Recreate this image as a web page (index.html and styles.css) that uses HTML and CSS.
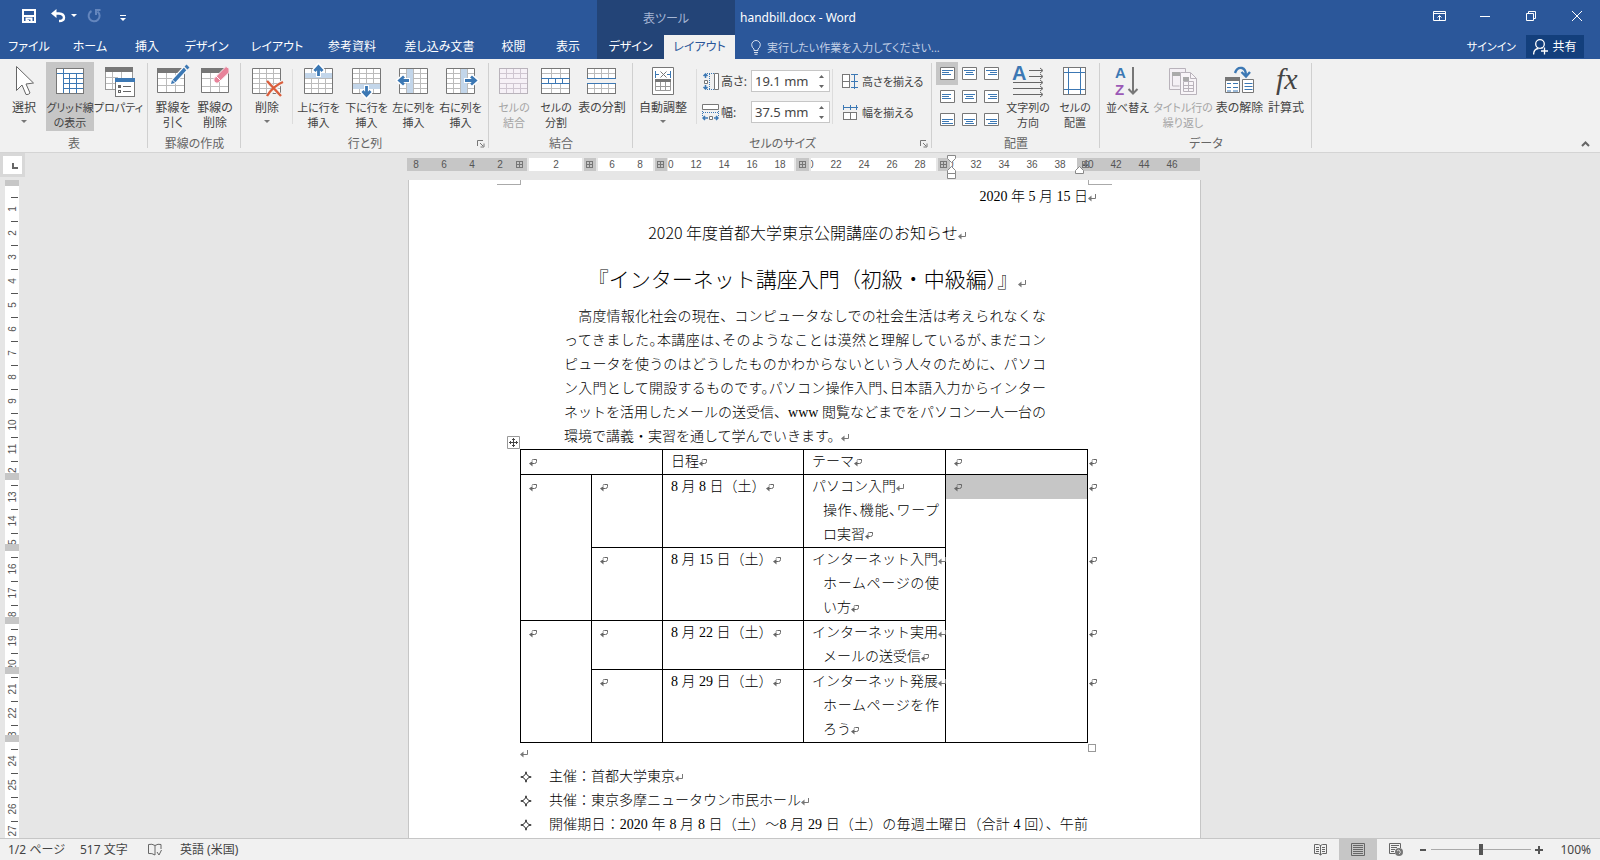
FILE: index.html
```html
<!DOCTYPE html>
<html lang="ja">
<head>
<meta charset="utf-8">
<title>handbill.docx - Word</title>
<link rel="stylesheet" href="styles.css">
</head>
<body>
<svg class="defs" aria-hidden="true">
  <defs>
    <symbol id="para" viewBox="0 0 8 8"><path d="M7.5 0V4.5H2" fill="none" stroke="#777"/><path d="M0 4.5L3.5 1.500V7.500z" fill="#777"/></symbol>
    <symbol id="cell" viewBox="0 0 8 8"><path d="M3 1.500Q3 .5 4.500.5H7.500V2.500Q7.500 4.500 5.500 4.500H2" fill="none" stroke="#666"/><path d="M0 4.500L3.500 2V7.500z" fill="#666"/></symbol>
    <symbol id="grid" viewBox="0 0 32 34"><path d="M1.500 4.500h28v25h-28z" fill="#fff"/><path d="M8.500 5v24M15.500 5v24M22.500 5v24M2 9.500h27M2 14.500h27M2 19.500h27M2 24.500h27" stroke="#bbb"/><path d="M1.500 4.500h28v25h-28z" fill="none" stroke="#777"/></symbol>
    <symbol id="launch" viewBox="0 0 8 8"><path d="M.5 6V.5H6M3 3l3 3M7 3.500V7H3.500" fill="none" stroke="#777"/></symbol>
    <symbol id="star" viewBox="0 0 12 12"><path d="M6 .8Q6.500 5.500 11.200 6Q6.500 6.500 6 11.200Q5.500 6.500 .8 6Q5.500 5.500 6 .8z" fill="#fff" stroke="#222"/></symbol>
    <symbol id="hatch" viewBox="0 0 9 9"><path d="M1.500 1v7M4.500 1v7M7.500 1v7M1 1.500h7M1 4.500h7M1 7.500h7" stroke="#777"/></symbol>
  </defs>
</svg>
<div class="app">
  <header class="head">
    <div class="titlebar">
      <div class="quick">
        <button aria-label="上書き保存"><svg width="14" height="14" viewBox="0 0 14 14"><path d="M1 1h12v12H1z" fill="none" stroke="#fff" stroke-width="2"/><path d="M2 7h10M4.500 13V9.500h5V13" fill="none" stroke="#fff" stroke-width="2"/><path d="M5 11h2v2H5z" fill="#fff"/></svg></button>
        <button aria-label="元に戻す"><svg width="26" height="14" viewBox="0 0 26 14"><path d="M0 4.500L5.500 0V9z" fill="#fff"/><path d="M3 4.500h5q5 .5 5 4q0 3.500-5 3.500" fill="none" stroke="#fff" stroke-width="2.400"/><path d="M20 5h6l-3 3z" fill="#fff"/></svg></button>
        <button aria-label="やり直し"><svg width="14" height="14" viewBox="0 0 14 14"><path d="M4.500 2A5.500 5.500 0 1 0 10.500 2.500" fill="none" stroke="#6486bd" stroke-width="2"/><path d="M8 0h5.500v2H10v4H8z" fill="#6486bd"/></svg></button>
        <button class="more" aria-label="カスタマイズ"><svg width="6" height="8" viewBox="0 0 6 8"><path d="M0 1.500h6" stroke="#fff"/><path d="M0 4h6L3 7z" fill="#fff"/></svg></button>
      </div>
      <div class="context">表ツール</div>
      <h1>handbill.docx - Word</h1>
      <div class="window">
        <button aria-label="リボンの表示オプション"><svg width="13" height="10" viewBox="0 0 13 10"><path d="M.5.5h12v9H.500zM0 2.500h13M6.500 9V4.500M4.500 6.500l2-2 2 2" fill="none" stroke="#fff"/></svg></button>
        <button aria-label="最小化"><svg width="10" height="10" viewBox="0 0 10 10"><path d="M0 5.500h10" stroke="#fff"/></svg></button>
        <button aria-label="元のサイズに戻す"><svg width="10" height="10" viewBox="0 0 10 10"><path d="M.5 2.500h7v7h-7zM2.500 2V.5h7v7H8" fill="none" stroke="#fff"/></svg></button>
        <button aria-label="閉じる"><svg width="10" height="10" viewBox="0 0 10 10"><path d="M0 0l10 10M10 0L0 10" stroke="#fff"/></svg></button>
      </div>
    </div>
    <div class="tabrow">
      <nav class="tabs">
        <button>ファイル</button><button>ホーム</button><button>挿入</button><button>デザイン</button><button>レイアウト</button><button>参考資料</button><button>差し込み文書</button><button>校閲</button><button>表示</button><button class="dark">デザイン</button><button class="active">レイアウト</button>
      </nav>
      <button class="tell"><svg width="10" height="15" viewBox="0 0 10 15"><path d="M3 10.500V9Q.7 7.500.7 4.800A4.300 4.300 0 0 1 9.300 4.800Q9.300 7.500 7 9v1.500zM3 12.500h4M3.500 14.300h3" fill="none" stroke="#d6dfee"/></svg>実行したい作業を入力してください...</button>
      <a class="signin" href="#">サインイン</a>
      <button class="share"><svg width="15" height="16" viewBox="0 0 15 16"><path d="M.6 15.500Q.6 10 5.500 9.500M9.500 9.500l-1-1" fill="none" stroke="#fff" stroke-width="1.300"/><circle cx="7" cy="5" r="4.300" fill="none" stroke="#fff" stroke-width="1.300"/><path d="M11.500 8.500v7M8 12h7" stroke="#fff" stroke-width="1.300"/></svg>共有</button>
    </div>
  </header>

  <section class="ribbon" aria-label="レイアウト">
    <div class="group">
      <div class="tools g1">
        <button class="big"><svg class="ico" viewBox="0 0 32 34"><path d="M8.500 2.500V26.500L14 21l4 9.500q2.500.5 4-1.500L18 20l7.500-1z" fill="#fff" stroke="#666"/></svg><span>選択</span><i class="drop"></i></button>
        <button class="big on tight"><svg class="ico crisp" viewBox="0 0 32 34"><path d="M2.500 4.500h27v25h-27z" fill="#fff"/><path d="M9.500 5v24M15.500 10v19M22.500 10v19M10 14.500h19M10 19.500h19M10 24.500h19M3 9.500h26" stroke="#3c78b4"/><path d="M2.500 4.500h27v25h-27z" fill="none" stroke="#777"/></svg><span>グリッド線<br>の表示</span></button>
        <button class="big tight"><svg class="ico crisp" viewBox="0 0 32 34"><path d="M2.500 3.500h27v22h-27z" fill="#fff" stroke="#999"/><path d="M2 3h28v5H2z" fill="#777"/><path d="M9.500 8v17M18.500 8v10M3 13.500h12M3 19.500h12" stroke="#bbb"/><path d="M12.500 14.500h19v18h-19z" fill="#fff" stroke="#777"/><path d="M12 14h20v4H12z" fill="#3c78b4"/><path d="M20 22.500h8M20 27.500h8" stroke="#666"/><circle cx="16.500" cy="22.500" r="1.500" fill="#666"/><circle cx="16.500" cy="27.500" r="1" fill="#fff" stroke="#666"/></svg><span>プロパティ</span></button>
      </div><p>表</p>
    </div>
    <div class="group">
      <div class="tools g2">
        <button class="big"><svg class="ico" viewBox="0 0 32 34"><path d="M.5 4.500h27v24H.500z" fill="#fff" stroke="#777"/><path d="M0 4h28v5H0z" fill="#777"/><path d="M9.500 9v19M18.500 9v19M1 14.500h26M1 21.500h26" stroke="#bbb"/><path d="M16 18L28 5" stroke="#fff" stroke-width="6"/><path d="M17 17L28 5" stroke="#3c78b4" stroke-width="3.600"/><path d="M29 4l2-2" stroke="#3c78b4" stroke-width="4"/><path d="M14 20l1-4 3 3z" fill="#3c78b4"/></svg><span>罫線を<br>引く</span></button>
        <button class="big"><svg class="ico" viewBox="0 0 32 34"><path d="M2.500 4.500h27v24h-27z" fill="#fff" stroke="#777"/><path d="M2 4h28v5H2z" fill="#777"/><path d="M11.500 9v19M20.500 9v19M3 14.500h12M3 22.500h26" stroke="#bbb"/><path d="M15 14.500L27 2.500l3 2v4L19 19h-2l-2-2z" fill="#e8839a" stroke="#f6e9ed"/><path d="M17 12l5 5" stroke="#fff"/></svg><span>罫線の<br>削除</span></button>
      </div><p>罫線の作成</p>
    </div>
    <div class="group">
      <div class="tools g3">
        <button class="big"><svg class="ico" viewBox="0 0 32 34"><use href="#grid"/><path d="M16 17l14 15M31 18L16 32" stroke="#f1f1f1" stroke-width="4"/><path d="M16 17l14 15M32 18Q22 22 16 32" fill="none" stroke="#da5e3c" stroke-width="2.400"/></svg><span>削除</span><i class="drop"></i></button>
        <i class="rule"></i>
        <button class="big tight"><svg class="ico" viewBox="0 0 32 34"><use href="#grid"/><path d="M2 9h27v5H2z" fill="#c3d6ea"/><path d="M15.500 13V3M11 7l4.500-5L20 7" fill="none" stroke="#fff" stroke-width="5"/><path d="M15.500 12V3M11.500 7l4-4.500 4 4.500" fill="none" stroke="#3c78b4" stroke-width="2.800"/></svg><span>上に行を<br>挿入</span></button>
        <button class="big tight"><svg class="ico" viewBox="0 0 32 34"><use href="#grid"/><path d="M2 20h27v5H2z" fill="#c3d6ea"/><path d="M15.500 21v11M11 27l4.500 5 4.500-5" fill="none" stroke="#fff" stroke-width="5"/><path d="M15.500 22v9M11.500 27l4 4.500 4-4.500" fill="none" stroke="#3c78b4" stroke-width="2.800"/></svg><span>下に行を<br>挿入</span></button>
        <button class="big tight"><svg class="ico" viewBox="0 0 32 34"><use href="#grid"/><path d="M9 5h6v24H9z" fill="#c3d6ea"/><path d="M12 16.500H2M6 12l-5 4.500L6 21" fill="none" stroke="#fff" stroke-width="5"/><path d="M11 16.500H2M6 12.500l-4.500 4L6 20.500" fill="none" stroke="#3c78b4" stroke-width="2.800"/></svg><span>左に列を<br>挿入</span></button>
        <button class="big tight"><svg class="ico" viewBox="0 0 32 34"><use href="#grid"/><path d="M16 5h6v24h-6z" fill="#c3d6ea"/><path d="M19 16.500h11M26 12l5 4.500-5 4.500" fill="none" stroke="#fff" stroke-width="5"/><path d="M20 16.500h10M26 12.500l4.500 4-4.500 4" fill="none" stroke="#3c78b4" stroke-width="2.800"/></svg><span>右に列を<br>挿入</span></button>
      </div><p>行と列</p><button class="launch" aria-label="表の行と列"><svg width="8" height="8"><use href="#launch"/></svg></button>
    </div>
    <div class="group">
      <div class="tools g4">
        <button class="big tight" disabled><svg class="ico crisp" viewBox="0 0 32 34"><path d="M1.500 4.500h28v25h-28z" fill="#f6f1f7" stroke="#b9b3bb"/><path d="M8.500 5v9M15.500 5v9M22.500 5v9M8.500 20v9M15.500 20v9M22.500 20v9M2 9.500h27M2 14.500h27M2 19.500h27M2 24.500h27" stroke="#cfc6d1"/></svg><span>セルの<br>結合</span></button>
        <button class="big tight"><svg class="ico crisp" viewBox="0 0 32 34"><path d="M1.500 4.500h28v25h-28z" fill="#fff" stroke="#777"/><path d="M11.500 5v9M20.500 5v9M11.500 20v9M20.500 20v9M2 9.500h27M2 24.500h27" stroke="#bbb"/><path d="M1 14.500h29M1 19.500h29M8.500 15v4M15.500 15v4M22.500 15v4" stroke="#3c78b4"/></svg><span>セルの<br>分割</span></button>
        <button class="big"><svg class="ico crisp" viewBox="0 0 32 34"><path d="M1.500 4.500h28v10h-28zM1.500 19.500h28v10h-28z" fill="#fff" stroke="#777"/><path d="M8.500 5v9M15.500 5v9M22.500 5v9M8.500 20v9M15.500 20v9M22.500 20v9M2 9.500h27M2 24.500h27" stroke="#bbb"/><path d="M1 14.500h29M1 19.500h29" stroke="#3c78b4"/></svg><span>表の分割</span></button>
      </div><p>結合</p>
    </div>
    <div class="group">
      <div class="tools g5">
        <button class="big"><svg class="ico" viewBox="0 0 32 34"><path d="M5.500 3.500h21v27h-21z" fill="#fff" stroke="#777"/><path d="M8.500 7v7M23.500 7v7M9 10.500h3M20 10.500h3" stroke="#3c78b4"/><path d="M13.500 7.500l6 6M19.500 7.500l-6 6" stroke="#777"/><path d="M8.500 16.500h15v10h-15zM13.500 18v8M18.500 18v8M9 22.500h14" fill="none" stroke="#999"/><path d="M8 15h16v3H8z" fill="#777"/></svg><span>自動調整</span><i class="drop"></i></button>
        <i class="rule"></i>
        <div class="sizes">
          <label for="h"><svg class="mini" viewBox="0 0 17 17"><path d="M5 .5h7M5 16.500h7M7.500 1v15" fill="none" stroke="#3c78b4" stroke-dasharray="1 1"/><path d="M12.500.5h4v16h-4zM2.500 7.500h3v3h-3z" fill="#fff" stroke="#777"/><path d="M3.500 1v4M1.500 3l2-2 2 2M3.500 12v4M1.500 14l2 2 2-2" fill="none" stroke="#3c78b4" stroke-width="1.500"/></svg>高さ:</label>
          <div class="spin"><input id="h" type="text" value="19.1 mm"><button aria-label="高さの増減"><svg width="5" height="13" viewBox="0 0 5 13"><path d="M0 3L2.500 0 5 3zM0 10l2.500 3L5 10z" fill="#666"/></svg></button></div>
          <label for="w"><svg class="mini" viewBox="0 0 17 17"><path d="M.5.5h16v5H.500zM7.500 12.500h3v3h-3z" fill="#fff" stroke="#777"/><path d="M.5 7v5M16.500 7v5M1 8.500h15" fill="none" stroke="#3c78b4" stroke-dasharray="1 1"/><path d="M1 14h5M3 12l-2 2 2 2M12 14h4M14 12l2 2-2 2" fill="none" stroke="#3c78b4" stroke-width="1.500"/></svg>幅:</label>
          <div class="spin"><input id="w" type="text" value="37.5 mm"><button aria-label="幅の増減"><svg width="5" height="13" viewBox="0 0 5 13"><path d="M0 3L2.500 0 5 3zM0 10l2.500 3L5 10z" fill="#666"/></svg></button></div>
        </div>
        <i class="rule"></i>
        <div class="evens">
          <button><svg class="mini crisp" viewBox="0 0 17 17"><path d="M.5 1.500h7v13h-7zM1 8.500h7" fill="#fff" stroke="#777"/><path d="M9 1.500h7M9 8.500h7M9 14.500h7M12.500 1v15" stroke="#3c78b4"/></svg>高さを揃える</button>
          <button><svg class="mini crisp" viewBox="0 0 17 17"><path d="M1.500 8.500h13v7h-13zM8.500 9v7" fill="#fff" stroke="#777"/><path d="M1 3.500h15M1.500 1v5M8.500 1v5M14.500 1v5" stroke="#3c78b4"/></svg>幅を揃える</button>
        </div>
      </div><p>セルのサイズ</p><button class="launch" aria-label="表のプロパティ"><svg width="8" height="8"><use href="#launch"/></svg></button>
    </div>
    <div class="group">
      <div class="tools g6">
        <div class="aligns">
          <button class="on" aria-label="上揃え (左)"><svg viewBox="0 0 15 13"><path d="M.5.5h14v12H.500z"/><path class="ln" d="M2 3.500h11M2 5.500h7M2 7.500h9"/></svg></button>
          <button aria-label="上揃え (中央)"><svg viewBox="0 0 15 13"><path d="M.5.5h14v12H.500z"/><path class="ln" d="M2 3.500h11M4 5.500h7M3 7.500h9"/></svg></button>
          <button aria-label="上揃え (右)"><svg viewBox="0 0 15 13"><path d="M.5.5h14v12H.500z"/><path class="ln" d="M2 3.500h11M6 5.500h7M4 7.500h9"/></svg></button>
          <button aria-label="左"><svg viewBox="0 0 15 13"><path d="M.5.5h14v12H.500z"/><path class="ln" d="M2 4.500h9M2 6.500h7M2 8.500h9"/></svg></button>
          <button aria-label="中央"><svg viewBox="0 0 15 13"><path d="M.5.5h14v12H.500z"/><path class="ln" d="M2 4.500h11M4 6.500h7M3 8.500h9"/></svg></button>
          <button aria-label="右"><svg viewBox="0 0 15 13"><path d="M.5.5h14v12H.500z"/><path class="ln" d="M4 4.500h9M6 6.500h7M4 8.500h9"/></svg></button>
          <button aria-label="下揃え (左)"><svg viewBox="0 0 15 13"><path d="M.5.5h14v12H.500z"/><path class="ln" d="M2 6.500h11M2 8.500h7M2 10.500h11"/></svg></button>
          <button aria-label="下揃え (中央)"><svg viewBox="0 0 15 13"><path d="M.5.5h14v12H.500z"/><path class="ln" d="M2 6.500h11M4 8.500h7M3 10.500h9"/></svg></button>
          <button aria-label="下揃え (右)"><svg viewBox="0 0 15 13"><path d="M.5.5h14v12H.500z"/><path class="ln" d="M2 6.500h11M6 8.500h7M4 10.500h9"/></svg></button>
        </div>
        <button class="big tight"><svg class="ico" viewBox="0 0 32 34"><text x="0" y="16" class="glyph blue" font-size="20">A</text><path d="M17 6.500h13M17 12.500h13M1 18.500h29M1 24.500h29M1 30.500h29M28 4l3 2.500L28 9M28 10l3 2.500-3 2.500M28 16l3 2.500-3 2.500M28 22l3 2.500-3 2.500M28 28l3 2.500-3 2.500" fill="none" stroke="#666"/></svg><span>文字列の<br>方向</span></button>
        <button class="big tight"><svg class="ico crisp" viewBox="0 0 32 34"><path d="M4.500 3.500h22v27h-22z" fill="#fff" stroke="#777"/><path d="M9.500 4v26M21.500 4v26M5 8.500h21M5 25.500h21" stroke="#3c78b4"/></svg><span>セルの<br>配置</span></button>
      </div><p>配置</p>
    </div>
    <div class="group">
      <div class="tools g7">
        <button class="big tight"><svg class="ico" viewBox="0 0 32 34"><text x="3" y="14" class="glyph blue" font-size="15">A</text><text x="3" y="31" class="glyph violet" font-size="15">Z</text><path d="M21 3v26M16.500 25l4.500 4.500 4.500-4.500" fill="none" stroke="#777" stroke-width="2"/></svg><span>並べ替え</span></button>
        <button class="big tight" disabled><svg class="ico" viewBox="0 0 32 34"><path d="M2.500 4.500h16v21h-16z" fill="#f4f0f5" stroke="#b9b3bb"/><path d="M5 8h8v4H5z" fill="#aaa"/><path d="M5.500 12v10h7" fill="none" stroke="#b9b3bb"/><path d="M13.500 8.500h10l6 6v16h-16z" fill="#f8f5f8" stroke="#b9b3bb"/><path d="M23.500 9v5.500h6M16.500 17.500h10v10h-10zM21.500 17v10M16 21.500h11M16 24.500h11" fill="none" stroke="#b9b3bb"/><path d="M16 13h6v4h-6z" fill="#aaa"/></svg><span>タイトル行の<br>繰り返し</span></button>
        <button class="big"><svg class="ico" viewBox="0 0 32 34"><path d="M1.500 13.500h14v15h-14zM18.500 15.500h11v13h-11z" fill="#fff" stroke="#777"/><path d="M1 13h15v4H1z" fill="#777"/><path d="M3 19.500h4M9 19.500h5M3 23.500h4M9 23.500h5M3 27h4M9 27h5M20.500 19.500h8M20.500 22.500h8M20.500 25.500h8" stroke="#3c78b4"/><path d="M11 9Q13 3 18 4q4 1 4 8M17.500 8l4.500 4.500L26 8" fill="none" stroke="#3c78b4" stroke-width="2.400"/></svg><span>表の解除</span></button>
        <button class="big"><svg class="ico" viewBox="0 0 32 34"><text x="6" y="25" class="fx" font-size="30">fx</text></svg><span>計算式</span></button>
      </div><p>データ</p>
    </div>
    <button class="collapse" aria-label="リボンを折りたたむ"><svg width="9" height="6" viewBox="0 0 9 6"><path d="M1 5l3.500-3.500L8 5" fill="none" stroke="#666" stroke-width="2"/></svg></button>
  </section>

  <main class="work">
    <aside class="vrule">
      <button class="corner" aria-label="タブ"><svg width="6" height="6" viewBox="0 0 6 6"><path d="M1 0v5h5" fill="none" stroke="#666" stroke-width="2"/></svg></button>
      <svg width="25" height="661" viewBox="0 177 25 661">
        <path d="M5 180h14v658H5z" fill="#fff"/>
        <path d="M14.500 197v640" stroke="#555" stroke-width="7" stroke-dasharray="1 23"/>
        <g class="num">
          <text transform="translate(16 209) rotate(-90)">1</text><text transform="translate(16 233) rotate(-90)">2</text><text transform="translate(16 257) rotate(-90)">3</text><text transform="translate(16 281) rotate(-90)">4</text><text transform="translate(16 305) rotate(-90)">5</text><text transform="translate(16 329) rotate(-90)">6</text><text transform="translate(16 353) rotate(-90)">7</text><text transform="translate(16 377) rotate(-90)">8</text><text transform="translate(16 401) rotate(-90)">9</text><text transform="translate(16 425) rotate(-90)">10</text><text transform="translate(16 449) rotate(-90)">11</text><text transform="translate(16 473) rotate(-90)">12</text><text transform="translate(16 497) rotate(-90)">13</text><text transform="translate(16 521) rotate(-90)">14</text><text transform="translate(16 545) rotate(-90)">15</text><text transform="translate(16 569) rotate(-90)">16</text><text transform="translate(16 593) rotate(-90)">17</text><text transform="translate(16 617) rotate(-90)">18</text><text transform="translate(16 641) rotate(-90)">19</text><text transform="translate(16 665) rotate(-90)">20</text><text transform="translate(16 689) rotate(-90)">21</text><text transform="translate(16 713) rotate(-90)">22</text><text transform="translate(16 737) rotate(-90)">23</text><text transform="translate(16 761) rotate(-90)">24</text><text transform="translate(16 785) rotate(-90)">25</text><text transform="translate(16 809) rotate(-90)">26</text><text transform="translate(16 831) rotate(-90)">27</text>
        </g>
        <path d="M5 180h14v6H5zM5 473h14v7H5zM5 544h14v7H5zM5 617h14v7H5zM5 667h14v7H5zM5 735h14v7H5z" fill="#c6c6c6"/>
      </svg>
    </aside>
    <div class="desk">
      <svg class="hrule" width="795" height="27" viewBox="407 153 795 27">
        <path d="M407 158h793v13H407z" fill="#fff"/>
        <path d="M407 158h120v13H407zM1077 158h123v13h-123z" fill="#c6c6c6"/>
        <g class="num">
          <text x="416" y="168">8</text><text x="444" y="168">6</text><text x="472" y="168">4</text><text x="500" y="168">2</text><text x="556" y="168">2</text><text x="612" y="168">6</text><text x="640" y="168">8</text><text x="668" y="168">10</text><text x="696" y="168">12</text><text x="724" y="168">14</text><text x="752" y="168">16</text><text x="780" y="168">18</text><text x="808" y="168">20</text><text x="836" y="168">22</text><text x="864" y="168">24</text><text x="892" y="168">26</text><text x="920" y="168">28</text><text x="948" y="168">30</text><text x="976" y="168">32</text><text x="1004" y="168">34</text><text x="1032" y="168">36</text><text x="1060" y="168">38</text><text x="1088" y="168">40</text><text x="1116" y="168">42</text><text x="1144" y="168">44</text><text x="1172" y="168">46</text>
        </g>
        <path d="M527 158h2v13h-2zM582 158h16v13h-16zM653 158h15v13h-15zM794 158h17v13h-17zM936 158h14v13h-14z" fill="#e6e6e6"/>
        <path d="M584 158h12v13h-12zM655 158h12v13h-12zM796 158h13v13h-13zM938 158h12v13h-12z" fill="#c6c6c6"/>
        <use href="#hatch" x="515" y="160" width="9" height="9"/><use href="#hatch" x="585" y="160" width="9" height="9"/><use href="#hatch" x="656" y="160" width="9" height="9"/><use href="#hatch" x="798" y="160" width="9" height="9"/><use href="#hatch" x="939" y="160" width="9" height="9"/><use href="#hatch" x="1081" y="160" width="9" height="9"/>
        <path d="M947.500 155.500h8v3l-4 4-4-4zM947.500 173.500v-3l4-4 4 4v3zM947.500 173.500h8v5h-8zM1075.500 173.500v-3l4-4 4 4v3z" fill="#fff" stroke="#888"/>
      </svg>
      <article class="page">
        <i class="crop left"></i><i class="crop right"></i>
        <p class="date">2020 年 5 月 15 日<svg class="mk out"><use href="#para"/></svg></p>
        <h2>2020 年度首都大学東京公開講座のお知らせ<svg class="mk"><use href="#para"/></svg></h2>
        <h3>『インターネット講座入門（初級・中級編）』<svg class="mk"><use href="#para"/></svg></h3>
        <p class="lead">
          <span>　高度情報化社会の現在、コンピュータなしでの社会生活は考えられなくな</span>
          <span class="half">ってきました。本講座は、そのようなことは漠然と理解しているが、まだコン</span>
          <span>ピュータを使うのはどうしたものかわからないという人々のために、パソコ</span>
          <span class="half">ン入門として開設するものです。パソコン操作入門、日本語入力からインター</span>
          <span>ネットを活用したメールの送受信、www 閲覧などまでをパソコン一人一台の</span>
          <span class="end">環境で講義・実習を通して学んでいきます。<svg class="mk"><use href="#para"/></svg></span>
        </p>
        <div class="tablebox">
          <svg class="move" viewBox="0 0 13 13"><path d="M.5.5h12v12H.500z" fill="#fff" stroke="#999"/><path d="M6.500 2v9M2 6.500h9M5 3.500h3M5 9.500h3M3.500 5v3M9.500 5v3" stroke="#444"/></svg>
          <table>
            <colgroup><col class="c1"><col class="c1"><col class="c2"><col class="c3"><col class="c3"><col class="c0"></colgroup>
            <tr><td colspan="2"><svg class="mk"><use href="#cell"/></svg></td><td>日程<svg class="mk"><use href="#cell"/></svg></td><td>テーマ<svg class="mk"><use href="#cell"/></svg></td><td><svg class="mk"><use href="#cell"/></svg></td><td class="eor"><svg class="mk"><use href="#cell"/></svg></td></tr>
            <tr><td rowspan="2"><svg class="mk"><use href="#cell"/></svg></td><td><svg class="mk"><use href="#cell"/></svg></td><td>8 月 8 日（土）<svg class="mk"><use href="#cell"/></svg></td><td>パソコン入門<svg class="mk"><use href="#para"/></svg><span class="sub half wide">操作、機能、ワープ</span><span class="sub">ロ実習<svg class="mk"><use href="#cell"/></svg></span></td><td rowspan="4" class="pick"><div><svg class="mk"><use href="#cell"/></svg></div></td><td class="eor"><svg class="mk"><use href="#cell"/></svg></td></tr>
            <tr><td><svg class="mk"><use href="#cell"/></svg></td><td>8 月 15 日（土）<svg class="mk"><use href="#cell"/></svg></td><td>インターネット入門<svg class="mk"><use href="#para"/></svg><span class="sub wide">ホームページの使</span><span class="sub">い方<svg class="mk"><use href="#cell"/></svg></span></td><td class="eor"><svg class="mk"><use href="#cell"/></svg></td></tr>
            <tr><td rowspan="2"><svg class="mk"><use href="#cell"/></svg></td><td><svg class="mk"><use href="#cell"/></svg></td><td>8 月 22 日（土）<svg class="mk"><use href="#cell"/></svg></td><td>インターネット実用<svg class="mk"><use href="#para"/></svg><span class="sub">メールの送受信<svg class="mk"><use href="#cell"/></svg></span></td><td class="eor"><svg class="mk"><use href="#cell"/></svg></td></tr>
            <tr><td><svg class="mk"><use href="#cell"/></svg></td><td>8 月 29 日（土）<svg class="mk"><use href="#cell"/></svg></td><td>インターネット発展<svg class="mk"><use href="#para"/></svg><span class="sub wide">ホームページを作</span><span class="sub">ろう<svg class="mk"><use href="#cell"/></svg></span></td><td class="eor"><svg class="mk"><use href="#cell"/></svg></td></tr>
          </table>
          <i class="resize"></i>
        </div>
        <p class="blank"><svg class="mk"><use href="#para"/></svg></p>
        <ul>
          <li><svg class="star"><use href="#star"/></svg><span>主催：首都大学東京<svg class="mk"><use href="#para"/></svg></span></li>
          <li><svg class="star"><use href="#star"/></svg><span>共催：東京多摩ニュータウン市民ホール<svg class="mk"><use href="#para"/></svg></span></li>
          <li><svg class="star"><use href="#star"/></svg><span class="full">開催期日：2020 年 8 月 8 日（土）～8 月 29 日（土）の毎週土曜日（合計 4 回）、午前</span></li>
        </ul>
      </article>
    </div>
  </main>

  <footer class="status">
    <span class="s1">1/2 ページ</span><span class="s2">517 文字</span>
    <svg class="s3" width="14" height="14" viewBox="0 0 14 14"><path d="M7 2.500Q4 .5.5 1.500v9Q4 10 7 12M7 2.500v9.500M7 2.500Q10 .5 13 1.500V6M9 9l2 3 2.500-5" fill="none" stroke="#666"/></svg>
    <span class="s4">英語 (米国)</span>
    <div class="views">
      <button aria-label="閲覧モード"><svg width="13" height="13" viewBox="0 0 13 13"><path d="M.5 1.500h4l2 1 2-1h4v9h-4l-2 1.500-2-1.500h-4zM6.500 2v10M2 4.500h3M2 6.500h3M2 8.500h3M8 4.500h3M8 6.500h3M8 8.500h3" fill="none" stroke="#666"/></svg></button>
      <button class="on" aria-label="印刷レイアウト"><svg width="14" height="13" viewBox="0 0 14 13"><path d="M.5.5h13v12H.500zM2 2.500h10M2 4.500h10M2 6.500h10M2 8.500h10M2 10.500h10" fill="none" stroke="#666"/></svg></button>
      <button aria-label="Web レイアウト"><svg width="14" height="13" viewBox="0 0 14 13"><path d="M6 10.500H.5V.5h11V5M2 2.500h8M2 4.500h6M2 6.500h4M2 8.500h3" fill="none" stroke="#666"/><circle cx="10" cy="9" r="4" fill="#777"/><path d="M8 8q2-2 3 0t-1 3" fill="none" stroke="#ddd"/></svg></button>
    </div>
    <div class="zoom">
      <button aria-label="縮小"><svg width="8" height="8" viewBox="0 0 8 8"><path d="M1 4h6" stroke="#555" stroke-width="2"/></svg></button>
      <input type="range" min="0" max="100" value="50" aria-label="ズーム">
      <button aria-label="拡大"><svg width="8" height="8" viewBox="0 0 8 8"><path d="M0 4h8M4 0v8" stroke="#555" stroke-width="2"/></svg></button>
      <span>100%</span>
    </div>
  </footer>
</div>
</body>
</html>
```
FILE: styles.css
```css
* { box-sizing: border-box; }
body { margin: 0; font: 12px/15px "Noto Sans", "Noto Sans CJK JP", sans-serif; color: #444; font-feature-settings: "palt"; }
p, h1, h2, h3, ul { margin: 0; padding: 0; }
h1 { font-weight: 400; }
button { font: inherit; font-feature-settings: inherit; color: inherit; background: none; border: 0; padding: 0; margin: 0; white-space: nowrap; display: flex; align-items: center; justify-content: center; }
svg { display: block; flex: none; }
.defs { position: absolute; width: 0; height: 0; }
.crisp { shape-rendering: crispEdges; }
.app { height: 100vh; display: flex; flex-direction: column; overflow: hidden; }

/* title bar and tabs */
.head { background: #2b579a; color: #fff; flex: none; }
.titlebar { display: grid; grid-template-columns: 597px 138px 1fr auto; height: 35px; }
.quick { display: flex; align-items: center; gap: 10px; padding: 0 0 6px 22px; }
.quick button:nth-child(2) { margin-left: 5px; }
.quick .more { margin-left: 9px; padding-top: 4px; }
.context { background: #234477; color: #a6b6d4; text-align: center; line-height: 37px; font-size: 12px; }
.titlebar h1 { font-size: 12px; line-height: 35px; padding-left: 5px; }
.window { display: grid; grid-template-columns: repeat(4, 46px); padding: 0 0 5px 0; }
.tabrow { display: flex; height: 24px; }
.tabs { display: grid; grid-template-columns: 58px 64px 50px 69px 72px 78px 97px 51px 58px 67px 71px; }
.tabs button { padding-bottom: 2px; }
.tabs .dark { background: #234477; }
.tabs .active { background: #f1f1f1; color: #2b579a; }
.tell { margin-left: 16px; gap: 6px; color: #c3d0e6; font-size: 11px; }
.signin { margin-left: auto; color: #fff; text-decoration: none; line-height: 23px; font-size: 11px; }
.share { background: #133f7c; margin: 0 16px 1px 10px; width: 58px; gap: 4px; }

/* ribbon */
.ribbon { flex: none; display: grid; grid-template-columns: 148px 93px 248px 144px 299px 168px 212px 1fr; height: 94px; background: #f1f1f1; border-bottom: 1px solid #d4d4d4; position: relative; }
.group { position: relative; padding-top: 3px; }
.group::after { content: ""; position: absolute; right: 0; top: 4px; bottom: 4px; width: 1px; background: #d0d0d0; }
.group p { text-align: center; color: #666; line-height: 25px; height: 21px; }
.tools { display: grid; height: 69px; }
.g1 { grid-template-columns: 44px 48px 49px; padding-left: 2px; }
.g2 { grid-template-columns: 42px 42px; padding-left: 4px; }
.g3 { grid-template-columns: 48px 3px 49px 47px 47px 47px; padding-left: 2px; }
.g4 { grid-template-columns: 42px 42px 50px; padding-left: 4px; }
.g5 { grid-template-columns: 58px 8px 128px 8px 1fr; padding-left: 1px; }
.g6 { grid-template-columns: 70px 50px 44px; padding-left: 1px; }
.g7 { grid-template-columns: 49px 62px 51px 42px; padding-left: 3px; }
.tools .big { flex-direction: column; justify-content: flex-start; padding-top: 2px; line-height: 15px; }
.tools .tight { font-size: 11px; }
.big span { margin-top: 2px; }
.on { background: #c6c6c6; }
.big:disabled { color: #a5a5a5; }
.ico { width: 32px; height: 34px; overflow: visible; }
.drop { border: 3px solid transparent; border-top-color: #777; border-bottom: 0; margin-top: 5px; }
.rule { width: 1px; background: #dcdcdc; margin: 7px 0; justify-self: center; }
.launch { position: absolute; right: 4px; bottom: 4px; }
.sizes { display: grid; grid-template-columns: 49px 79px; row-gap: 9px; padding: 8px 0 0 2px; align-content: start; }
.sizes label { display: flex; align-items: center; gap: 2px; white-space: nowrap; }
.mini { width: 17px; height: 17px; }
.spin { display: flex; height: 22px; background: #fff; border: 1px solid #c6c6c6; }
.spin input { flex: 1; min-width: 0; border: 0; padding: 0 0 0 3px; background: none; color: #444; font: 13px/20px "Noto Sans", sans-serif; }
.spin button { width: 16px; }
.evens { display: grid; grid-template-rows: 22px 22px; row-gap: 9px; padding: 8px 0 0 6px; justify-items: start; font-size: 11px; }
.evens button { gap: 3px; }
.aligns { display: grid; grid-template-columns: repeat(3, 22px); grid-template-rows: repeat(3, 23px); padding-left: 3px; }
.aligns svg { width: 15px; height: 13px; fill: #fff; stroke: #777; }
.aligns .ln { stroke: #3c78b4; }
.glyph { font-family: "Liberation Sans", sans-serif; font-weight: 700; }
.blue { fill: #3c78b4; }
.violet { fill: #9b59b6; }
.fx { font-family: "Liberation Serif", serif; font-style: italic; fill: #444; }
.collapse { position: absolute; right: 10px; bottom: 5px; }

/* workspace */
.work { flex: 1; min-height: 0; display: grid; grid-template-columns: 25px 1fr 16px; background: #e6e6e6; overflow: hidden; }
.vrule, .desk { min-height: 0; overflow: hidden; }
.corner { width: 25px; height: 24px; border: 3px solid #d8d8d8; background: #fff; padding: 2px 0 0 4px; }
.num { font: 10px "Liberation Sans", sans-serif; fill: #555; text-anchor: middle; }
.desk { display: flex; flex-direction: column; align-items: center; }
.page { flex: 1 0 auto; position: relative; width: 793px; background: #fff; border: solid #c6c6c6; border-width: 0 1px; padding: 5px 112px 0 111px; color: #000; font: 300 14px/24px "Liberation Serif", "Noto Sans CJK JP", serif; font-feature-settings: normal; }
.crop { position: absolute; top: 0; width: 24px; height: 5px; border-bottom: 1px solid #aaa; }
.crop.left { left: 88px; border-right: 1px solid #aaa; }
.crop.right { right: 88px; border-left: 1px solid #aaa; }
.mk { display: inline-block; width: 8px; height: 8px; vertical-align: -1px; }
.date { text-align: right; }
.date .out { margin-right: -8px; }
.page h2 { font: 300 16px/46px "Noto Sans CJK JP", sans-serif; text-align: center; padding: 0 0 2px 6px; }
.page h3 { font: 300 21px/42px "Noto Sans CJK JP", sans-serif; text-align: center; padding: 0 0 6px 6px; }
.lead { width: 482px; margin-left: 44px; }
.lead span { display: block; white-space: nowrap; text-align-last: justify; }
.lead .end { text-align-last: left; }
.half { font-feature-settings: "halt"; }
.tablebox { position: relative; margin-bottom: -2px; }
.move { position: absolute; left: -13px; top: -13px; width: 13px; height: 13px; }
.resize { position: absolute; right: -8px; bottom: -9px; width: 8px; height: 8px; border: 1px solid #999; }
table { border-collapse: collapse; table-layout: fixed; width: 579px; margin-right: -12px; }
.c1 { width: 71px; }
.c2 { width: 141px; }
.c3 { width: 142px; }
.c0 { width: 12px; }
td { border: 1px solid #000; padding: 0 0 0 8px; vertical-align: top; white-space: nowrap; }
.eor { border: 0; padding: 0 0 0 1px; }
.sub { display: block; padding-left: 11px; }
.wide { text-align-last: justify; padding-right: 6px; }
.pick { padding: 0; }
.pick div { background: #c6c6c6; padding-left: 8px; }
ul { list-style: none; }
li { display: flex; align-items: center; gap: 17px; }
li span { flex: 1; white-space: nowrap; }
.full { text-align-last: justify; }
.star { width: 12px; height: 12px; }

/* status bar */
.status { flex: none; height: 22px; display: flex; align-items: center; background: #f1f1f1; border-top: 1px solid #c6c6c6; padding: 0 9px 0 8px; }
.s1 { width: 72px; }
.s2 { width: 68px; }
.s3 { margin-right: 18px; }
.views { display: grid; grid-template-columns: repeat(3, 38px); align-self: stretch; margin-left: auto; }
.zoom { display: flex; align-items: center; margin-left: 4px; }
.zoom span { margin-left: 16px; width: 32px; text-align: right; }
.zoom input { appearance: none; width: 100px; height: 12px; margin: 0 4px; background: linear-gradient(#aaa, #aaa) center / 100% 1px no-repeat; }
.zoom input::-webkit-slider-thumb { appearance: none; width: 4px; height: 11px; background: #555; }
```
